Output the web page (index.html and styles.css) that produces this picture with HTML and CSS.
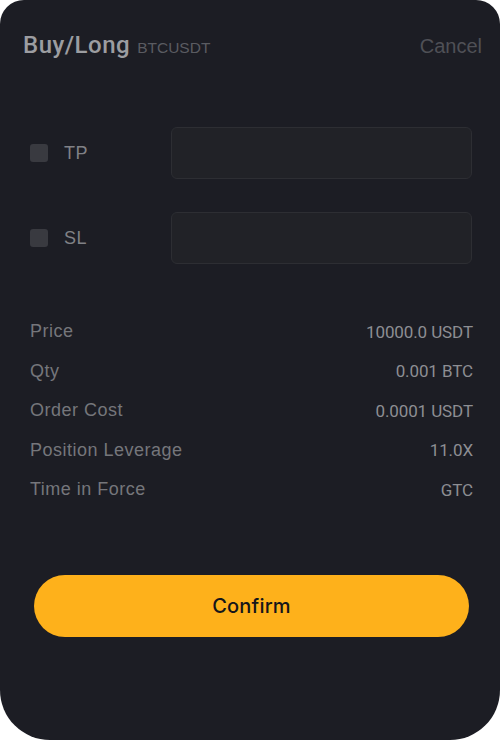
FILE: index.html
```html
<!DOCTYPE html>
<html>
<head>
<meta charset="utf-8">
<link rel="stylesheet" href="styles.css">
</head>
<body>
<div class="card">
  <div class="header">
    <div class="title-wrap">
      <span class="title">Buy/Long</span>
      <span class="symbol">BTCUSDT</span>
    </div>
    <span class="cancel">Cancel</span>
  </div>
  <div class="form">
    <div class="form-row">
      <label class="check"><span class="box"></span><span class="check-label">TP</span></label>
      <div class="input"></div>
    </div>
    <div class="form-row">
      <label class="check"><span class="box"></span><span class="check-label">SL</span></label>
      <div class="input"></div>
    </div>
  </div>
  <div class="info">
    <div class="info-row"><span class="k">Price</span><span class="v">10000.0 USDT</span></div>
    <div class="info-row"><span class="k">Qty</span><span class="v">0.001 BTC</span></div>
    <div class="info-row"><span class="k">Order Cost</span><span class="v">0.0001 USDT</span></div>
    <div class="info-row"><span class="k">Position Leverage</span><span class="v">11.0X</span></div>
    <div class="info-row"><span class="k">Time in Force</span><span class="v">GTC</span></div>
  </div>
  <div class="actions">
    <button class="confirm">Confirm</button>
  </div>
</div>
</body>
</html>
```
FILE: styles.css
```css
html, body {
  margin: 0;
  padding: 0;
  background: #ffffff;
}
body {
  font-family: "Liberation Sans", Arial, sans-serif;
}
.card {
  width: 500px;
  height: 740px;
  box-sizing: border-box;
  background: #1c1d24;
  border-radius: 24px 24px 50px 50px;
  overflow: hidden;
  display: flex;
  flex-direction: column;
}
.header {
  display: flex;
  justify-content: space-between;
  align-items: baseline;
  padding: 31px 18px 0 23px;
}
.title-wrap {
  display: flex;
  align-items: baseline;
  gap: 7px;
}
.title {
  font-family: Roboto, "Liberation Sans", sans-serif;
  font-weight: 500;
  font-size: 24px;
  line-height: 28px;
  color: #9c9da1;
  letter-spacing: 0.5px;
}
.symbol {
  font-size: 15.5px;
  color: #5a5b61;
}
.cancel {
  font-size: 20px;
  color: #4f5056;
}
.form {
  margin-top: 68px;
  display: flex;
  flex-direction: column;
  gap: 33px;
  padding: 0 28px 0 30px;
}
.form-row {
  display: flex;
  align-items: center;
  height: 52px;
}
.check {
  display: flex;
  align-items: center;
  width: 141px;
  flex: none;
}
.box {
  width: 18px;
  height: 18px;
  border-radius: 3px;
  background: #393a40;
}
.check-label {
  margin-left: 16px;
  font-size: 18px;
  letter-spacing: 0.5px;
  color: #808186;
}
.input {
  flex: 1;
  height: 52px;
  box-sizing: border-box;
  border: 1px solid #2d2e33;
  border-radius: 6px;
  background: #212227;
}
.info {
  margin-top: 48px;
  padding: 0 27px 0 30px;
  display: flex;
  flex-direction: column;
}
.info-row {
  display: flex;
  justify-content: space-between;
  align-items: center;
  height: 39.5px;
}
.k {
  font-size: 18px;
  letter-spacing: 0.5px;
  color: #75767b;
}
.v {
  font-family: Roboto, "Liberation Sans", sans-serif;
  font-weight: 400;
  font-size: 17px;
  color: #8d8e93;
  letter-spacing: -0.1px;
}
.actions {
  margin-top: 65px;
  padding: 0 31px 0 34px;
}
.confirm {
  display: block;
  width: 100%;
  height: 62px;
  border: none;
  border-radius: 31px;
  background: #feb11b;
  color: #15161a;
  font-family: Inter, "Liberation Sans", sans-serif;
  font-size: 20px;
  font-weight: 500;
  letter-spacing: 0.2px;
  padding-top: 2px;
}
```
